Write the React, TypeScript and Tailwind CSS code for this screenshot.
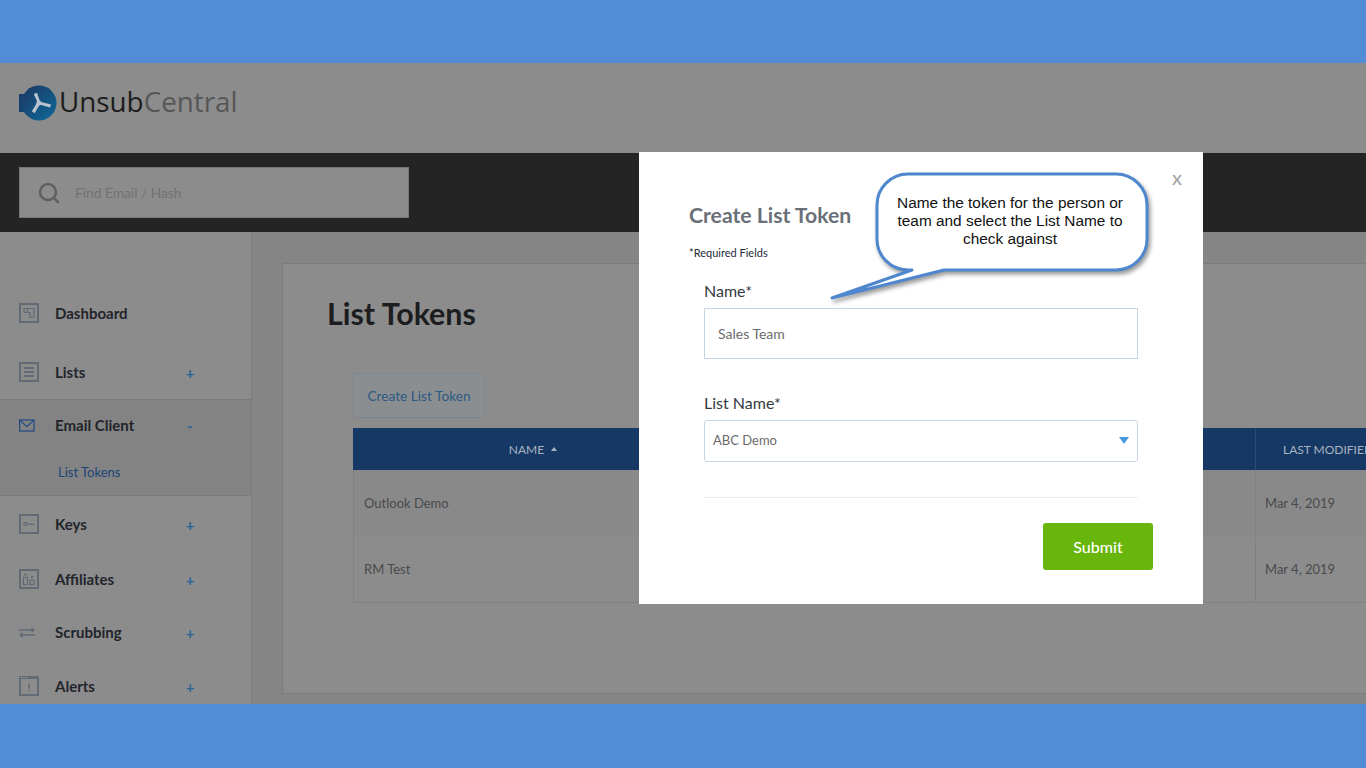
import React from 'react';
import { Search } from 'lucide-react';

const ICON = '#626a75';

const BoxIcon: React.FC<{ children: React.ReactNode }> = ({ children }) => (
  <svg width="20" height="20" viewBox="0 0 20 20" fill="none" stroke={ICON} strokeWidth="1.2">
    <rect x="1" y="1" width="18" height="18" fill="none" strokeWidth="2" />
    {children}
  </svg>
);

const DashboardIcon = () => (
  <BoxIcon>
    <path d="M5 5.5h10v9h-4V9.5H5z" />
    <path d="M8.5 5.5v4" />
  </BoxIcon>
);

const ListsIcon = () => (
  <BoxIcon>
    <path d="M5 6h10M5 10h10M5 14h10" strokeWidth="1.8" />
  </BoxIcon>
);

const MailIcon = () => (
  <svg width="16" height="13" viewBox="0 0 16 13" fill="none" stroke="#1d4a85" strokeWidth="1.2">
    <rect x="0.6" y="1" width="14.4" height="11" />
    <path d="M0.8 1.4 7.8 7.5l7-6.1" />
  </svg>
);

const KeyIcon = () => (
  <BoxIcon>
    <circle cx="6.5" cy="10" r="1.6" />
    <path d="M8 10h7M12.5 10v1.5M14.5 10v1.5" />
  </BoxIcon>
);

const AffiliatesIcon = () => (
  <BoxIcon>
    <circle cx="6.5" cy="5.5" r="1.2" fill={ICON} stroke="none" />
    <rect x="4.5" y="8.5" width="4" height="7" />
    <circle cx="13" cy="8" r="1.2" fill={ICON} stroke="none" />
    <rect x="11" y="11" width="4" height="4.5" />
  </BoxIcon>
);

const ScrubIcon = () => (
  <svg width="16" height="11" viewBox="0 0 16 11" fill={ICON}>
    <path d="M0 2.2h12.5V0L16 3l-3.5 3V3.8H0z" />
    <path d="M16 7.2H3.5V5L0 8l3.5 3V8.8H16z" />
  </svg>
);

const AlertsIcon = () => (
  <svg width="20" height="20" viewBox="0 0 20 20" fill="none">
    <rect x="1" y="1" width="18" height="18" stroke={ICON} strokeWidth="2" />
    <path d="M0 0h20v3H0z" fill={ICON} />
    <path d="M2 1.5h1M4.5 1.5h1M7 1.5h1" stroke="#b5b5b5" strokeWidth="1" />
    <path d="M10 7.5v5" stroke={ICON} strokeWidth="1.6" />
    <path d="M10 14v1.6" stroke={ICON} strokeWidth="1.6" />
  </svg>
);

const Logo = () => (
  <svg width="38" height="36" viewBox="0 0 38 36">
    <defs>
      <linearGradient id="logoFill" x1="0" y1="0" x2="1" y2="1">
        <stop offset="0" stopColor="#1c3763" />
        <stop offset="1" stopColor="#0e6a98" />
      </linearGradient>
    </defs>
    <path d="M0 9h6v5H3.5v8H6v5H0z" fill="#16406e" />
    <circle cx="20" cy="18" r="17.5" fill="url(#logoFill)" />
    <path d="M14.8 9 18 7.8 21 16.5 18.6 17.5z" fill="#b9c4d0" />
    <path d="M21 16.8 32 19.4 31 22.4 20.4 19.4z" fill="#b9c4d0" />
    <path d="M18.2 17.6 20.8 19.6 15.6 28.2 12.8 26.2z" fill="#b9c4d0" />
    <circle cx="19.8" cy="18" r="2.4" fill="#b9c4d0" />
  </svg>
);

const NavRow: React.FC<{ icon: React.ReactNode; label: string; sign?: string; className?: string }> = ({
  icon,
  label,
  sign,
  className = '',
}) => (
  <div className={`flex h-10 items-center pl-[19px] ${className}`}>
    <span className="flex w-9 items-center">{icon}</span>
    <span className="w-[129px] text-[15px] font-bold text-[#22252b]">{label}</span>
    {sign && <span className="mt-0.5 w-3 text-center text-[15px] font-bold leading-none text-[#2a6496]">{sign}</span>}
  </div>
);

const Sidebar = () => (
  <aside className="flex w-[252px] shrink-0 flex-col border-r border-[#787b80] bg-[#8c8c8c]">
    <div className="h-[168px] shrink-0 border-b border-[#787b80] pt-[61px]">
      <NavRow icon={<DashboardIcon />} label="Dashboard" />
      <NavRow icon={<ListsIcon />} label="Lists" sign="+" className="mt-[19px]" />
    </div>
    <div className="h-[96px] shrink-0 border-b border-[#787b80] bg-[#838383] pt-[5px]">
      <NavRow icon={<MailIcon />} label="Email Client" sign="-" />
      <div className="mt-[17px] h-5 pl-[58px] text-[13px] leading-5 text-[#1b4478]">List Tokens</div>
    </div>
    <div className="shrink-0 pt-2">
      <NavRow icon={<KeyIcon />} label="Keys" sign="+" />
      <NavRow icon={<AffiliatesIcon />} label="Affiliates" sign="+" className="mt-[15px]" />
      <NavRow icon={<ScrubIcon />} label="Scrubbing" sign="+" className="mt-[13px]" />
      <NavRow icon={<AlertsIcon />} label="Alerts" sign="+" className="mt-[14px]" />
    </div>
  </aside>
);

const TokenTable = () => (
  <div className="ml-[25px] mt-[10px] w-[1100px] border-b border-l border-[#7f8184] text-[13px] text-[#484a4e]">
    <div className="-ml-px flex h-[42px] items-center bg-[#163864] pt-px text-[12px] text-[#a9b4c2]">
      <div className="flex w-[348px] items-center justify-center gap-[7px] pl-3">
        NAME
        <span className="mb-0.5 h-0 w-0 border-x-[3px] border-b-[4px] border-x-transparent border-b-[#a9b4c2]" />
      </div>
      <div className="w-[554px]" />
      <div className="flex h-full items-center border-l border-[#2c4a78] pl-[27px]">LAST MODIFIED</div>
    </div>
    <div className="flex h-[66px] items-center bg-[#898989] pt-px">
      <div className="w-[347px] pl-[10px]">Outlook Demo</div>
      <div className="w-[554px]" />
      <div className="flex h-full items-center border-l border-[#7f8184] pl-[9px]">Mar 4, 2019</div>
    </div>
    <div className="flex h-[66px] items-center pt-px">
      <div className="w-[347px] pl-[10px]">RM Test</div>
      <div className="w-[554px]" />
      <div className="flex h-full items-center border-l border-[#7f8184] pl-[9px]">Mar 4, 2019</div>
    </div>
  </div>
);

const Callout = () => (
  <div className="absolute left-[826px] top-[168px] h-[136px] w-[330px]">
    <svg width="330" height="136" viewBox="0 0 330 136" className="absolute inset-0 drop-shadow-[2px_3px_2px_rgba(0,0,0,0.4)]">
      <path
        d="M82 6H290a31 31 0 0 1 31 31V71a31 31 0 0 1-31 31H118L6 130 86 102H82a31 31 0 0 1-31-31V37a31 31 0 0 1 31-31z"
        fill="#ffffff"
        stroke="#4f87cf"
        strokeWidth="3"
        strokeLinejoin="round"
      />
    </svg>
    <p className="absolute left-[60px] top-[26px] w-[248px] text-center font-['Liberation_Sans',sans-serif] text-[15.4px] leading-[18px] text-[#111]">
      Name the token for the person or team and select the List Name to check against
    </p>
  </div>
);

const Modal = () => (
  <div className="absolute left-[639px] top-[152px] h-[452px] w-[564px] bg-white pl-[50px]">
    <span className="absolute right-[21px] top-[13px] text-[20px] leading-[24px] text-[#a3a3a3]">x</span>
    <h2 className="pt-[49px] text-[21.2px] font-bold leading-[28px] text-[#6a7077]">Create List Token</h2>
    <p className="mt-[16px] text-[11px] leading-[16px] text-[#1f2a37]">*Required Fields</p>
    <div className="ml-[15px] w-[434px]">
      <label className="mt-[20px] block text-[16px] leading-[20px] text-[#333a42]">Name*</label>
      <div className="mt-[7px] flex h-[51px] items-center border border-[#c5d5e4] pl-[13px] text-[14px] text-[#6b6b6b]">
        Sales Team
      </div>
      <label className="mt-[34px] block text-[16px] leading-[20px] text-[#333a42]">List Name*</label>
      <div className="mt-[7px] flex h-[42px] items-center justify-between rounded-[3px] border border-[#c8d6e8] pb-px pl-2 pr-2 text-[13px] text-[#6b6b6b]">
        ABC Demo
        <span className="h-0 w-0 border-x-[5px] border-t-[7px] border-x-transparent border-t-[#4a98e0]" />
      </div>
      <div className="mt-[35px] border-t border-[#eeeeee]" />
    </div>
    <div className="mt-[25px] flex w-[464px] justify-end">
      <button className="h-[47px] w-[110px] rounded-[3px] bg-[#68b50c] text-[16px] font-medium text-white">Submit</button>
    </div>
  </div>
);

const App: React.FC = () => {
  return (
    <div className="relative flex h-[768px] w-[1366px] flex-col overflow-hidden bg-[#528bd6] font-['Lato',sans-serif]">
      <div className="h-[63px] shrink-0" />
      <div className="flex h-[641px] shrink-0 flex-col overflow-hidden bg-[#8c8c8c]">
        <header className="flex h-[90px] shrink-0 items-center pb-[11px] pl-[19px]">
          <Logo />
          <span className="-mt-px ml-[2px] font-['Open_Sans',sans-serif] text-[27.8px] text-[#1c1c1c]">
            Unsub<span className="text-[#565656]">Central</span>
          </span>
        </header>
        <div className="flex h-[79px] shrink-0 items-center bg-[#242424] pl-[19px]">
          <div className="flex h-[51px] w-[390px] items-center border border-[#75777d] bg-[#8c8c8c] pl-[17px]">
            <Search size={24} strokeWidth={2.5} className="text-[#5f5f5f]" />
            <span className="ml-[14px] pt-px text-[13.75px] text-[#727272]">Find Email / Hash</span>
          </div>
        </div>
        <div className="flex min-h-0 flex-1">
          <Sidebar />
          <main className="min-w-0 flex-1 bg-[#858585] pl-[30px] pt-[31px]">
            <section className="h-[431px] w-[1200px] rounded-l-[2px] border border-[#787b80] bg-[#8c8c8c] pl-[45px] pt-[31px]">
              <h1 className="-ml-px text-[30.4px] font-bold leading-[36px] text-[#1d1d1f]">List Tokens</h1>
              <button className="ml-[25px] mt-[42px] block h-[45px] w-[132px] rounded-[3px] border border-[#7c8791] bg-[#8b8e90] pt-px text-[13.7px] text-[#2c5a86]">
                Create List Token
              </button>
              <TokenTable />
            </section>
          </main>
        </div>
      </div>
      <Modal />
      <Callout />
    </div>
  );
};

export default App;
